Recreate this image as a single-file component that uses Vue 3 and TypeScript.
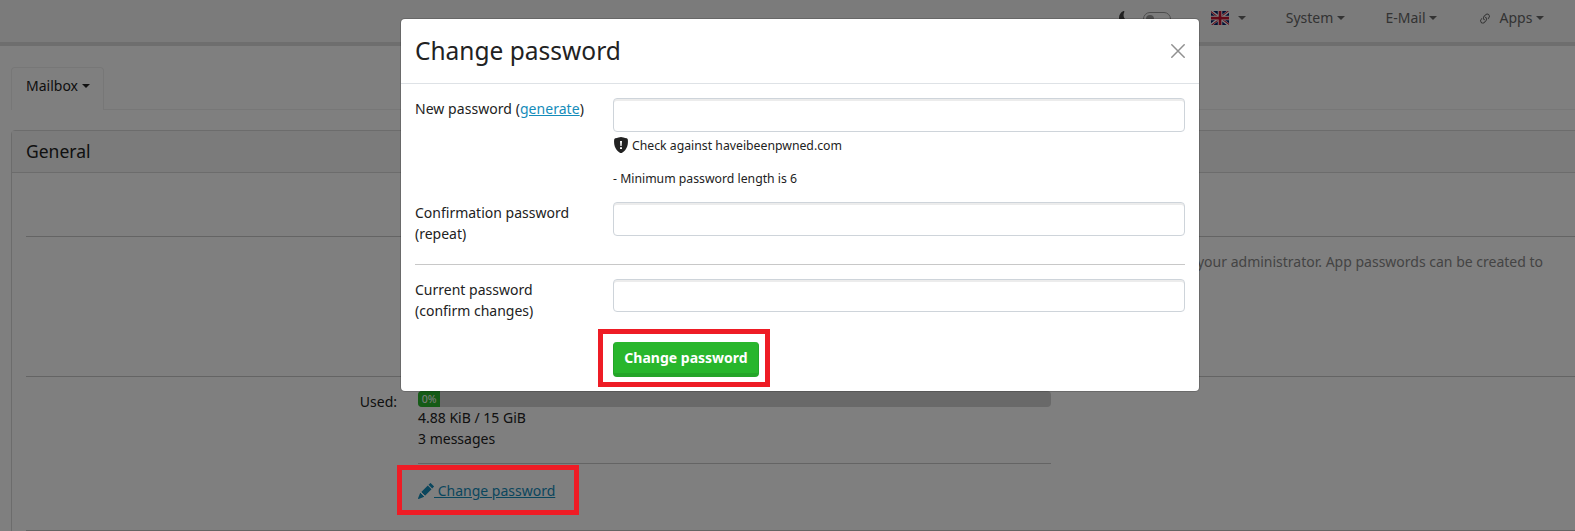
<script setup lang="ts">
interface NavItem {
  label: string
  icon?: boolean
}

const navItems: NavItem[] = [
  { label: 'System' },
  { label: 'E-Mail' },
  { label: 'Apps', icon: true },
]
const usedPercent = 0
</script>

<template>
  <div class="page">
    <nav class="navbar">
      <div class="theme">
        <svg class="moon" width="14" height="14" viewBox="0 0 16 16"><path d="M6 .278a.77.77 0 0 1 .08.858 7.2 7.2 0 0 0-.878 3.46c0 4.021 3.278 7.277 7.318 7.277q.792-.001 1.533-.16a.79.79 0 0 1 .81.316.73.73 0 0 1-.031.893A8.35 8.35 0 0 1 8.344 16C3.734 16 0 12.286 0 7.71 0 4.266 2.114 1.312 5.124.06A.75.75 0 0 1 6 .278" /></svg>
        <span class="switch"><i></i></span>
      </div>
      <div class="lang">
        <svg width="18" height="14" viewBox="0 0 640 480" preserveAspectRatio="none">
          <path fill="#012169" d="M0 0h640v480H0z" />
          <path fill="#fff" d="m75 0 244 181L562 0h78v62L400 241l240 178v61h-80L320 301 81 480H0v-60l239-178L0 64V0z" />
          <path fill="#c8102e" d="m424 281 216 159v40L369 281zm-184 20 6 35L54 480H0zM640 0v3L391 191l2-44L590 0zM0 0l239 176h-60L0 42z" />
          <path fill="#fff" d="M241 0v480h160V0zM0 160v160h640V160z" />
          <path fill="#c8102e" d="M0 193v96h640v-96zM273 0v480h96V0z" />
        </svg>
        <i class="caret"></i>
      </div>
      <div v-for="item in navItems" :key="item.label" class="nav-item">
        <svg v-if="item.icon" class="link-icon" width="14" height="14" viewBox="0 0 16 16">
          <path d="M4.715 6.542 3.343 7.914a3 3 0 1 0 4.243 4.243l1.828-1.829A3 3 0 0 0 8.586 5.5L8 6.086a1 1 0 0 0-.154.199 2 2 0 0 1 .861 3.337L6.88 11.45a2 2 0 1 1-2.83-2.83l.793-.792a4 4 0 0 1-.128-1.287z" />
          <path d="M6.586 4.672A3 3 0 0 0 7.414 9.5l.775-.776a2 2 0 0 1-.896-3.346L9.12 3.55a2 2 0 1 1 2.83 2.83l-.793.792c.112.42.155.855.128 1.287l1.372-1.372a3 3 0 1 0-4.243-4.243z" />
        </svg>
        <span>{{ item.label }}</span><i class="caret"></i>
      </div>
    </nav>

    <div class="tabs">
      <div class="tab"><span>Mailbox</span><i class="caret"></i></div>
    </div>

    <section class="card">
      <header class="card-header">General</header>
      <div class="card-body">
        <div class="block first"></div>
        <div class="block notice">your administrator. App passwords can be created to</div>
        <div class="block usage">
          <div class="usage-label">Used:</div>
          <div class="usage-main">
            <div class="progress"><div class="bar">{{ usedPercent }}%</div></div>
            <div>4.88 KiB / 15 GiB</div>
            <div>3 messages</div>
            <div class="change">
              <a class="change-link"><svg width="16" height="16" viewBox="0 0 16 16"><path d="M12.854.146a.5.5 0 0 0-.707 0L10.5 1.793 14.207 5.5l1.647-1.646a.5.5 0 0 0 0-.708zm.646 6.061L9.793 2.5 3.293 9H3.5a.5.5 0 0 1 .5.5v.5h.5a.5.5 0 0 1 .5.5v.5h.5a.5.5 0 0 1 .5.5v.5h.5a.5.5 0 0 1 .5.5v.207zm-7.468 7.468A.5.5 0 0 1 6 13.5V13h-.5a.5.5 0 0 1-.5-.5V12h-.5a.5.5 0 0 1-.5-.5V11h-.5a.5.5 0 0 1-.5-.5V10h-.5a.5.5 0 0 1-.175-.032l-.179.178a.5.5 0 0 0-.11.168l-2 5a.5.5 0 0 0 .65.65l5-2a.5.5 0 0 0 .168-.11z" /></svg><span>&nbsp;Change password</span></a>
            </div>
          </div>
        </div>
      </div>
    </section>

    <div class="backdrop">
      <div class="modal">
        <header class="modal-header">
          <h3>Change password</h3>
          <svg width="14" height="14" viewBox="0 0 14 14"><path d="M.8.8l12.4 12.4M13.2.8L.8 13.2" fill="none" stroke="#909090" stroke-width="1.5" stroke-linecap="round" /></svg>
        </header>
        <form class="modal-body" @submit.prevent>
          <div class="row new">
            <label>New password (<a>generate</a>)</label>
            <div class="field">
              <input type="password" />
              <div class="hint check">
                <svg width="14" height="16" viewBox="0 0 14 16"><path fill="#222" d="M7 0C6 0 3.2.8 1.3 1.3.7 1.5.3 2 .2 2.6-.4 7.2.9 10.6 2.7 12.9 4.2 14.8 6.3 16 7 16s2.8-1.2 4.3-3.1c1.8-2.3 3.1-5.7 2.5-10.3-.1-.6-.5-1.1-1.1-1.3C10.8.8 8 0 7 0z" /><path fill="#fff" d="M6 4h2l-.4 5H6.4zM6 10.2h2v1.800H6z" /></svg>
                <span>Check against haveibeenpwned.com</span>
              </div>
              <div class="hint rule">- Minimum password length is 6</div>
            </div>
          </div>
          <div class="row">
            <label>Confirmation password (repeat)</label>
            <div class="field"><input type="password" /></div>
          </div>
          <hr />
          <div class="row current">
            <label>Current password (confirm changes)</label>
            <div class="field"><input type="password" /></div>
          </div>
          <div class="actions"><button type="submit">Change password</button></div>
        </form>
      </div>
    </div>

    <div class="marker marker-button"></div>
    <div class="marker marker-link"></div>
  </div>
</template>

<style>
body {
  margin: 0;
  overflow: hidden;
}
</style>

<style scoped>
* {
  box-sizing: border-box;
}
.page {
  position: relative;
  width: 1575px;
  height: 531px;
  overflow: hidden;
  background: #fff;
  color: #222;
  font: 14px/21px "Noto Sans", sans-serif;
}
.navbar {
  display: flex;
  justify-content: flex-end;
  height: 46px;
  padding: 7px 31px 0 0;
  background: #f7f7f7;
  border-bottom: 4px solid #dcdcdc;
  color: #666;
}
.theme {
  display: flex;
  width: 92px;
}
.moon {
  margin: 4px 10px 0 0;
  fill: #444;
}
.switch {
  width: 28px;
  height: 14px;
  margin-top: 5px;
  padding: 2px;
  border: 1px solid #999;
  border-radius: 7px;
}
.switch i {
  display: block;
  width: 8px;
  height: 8px;
  border-radius: 50%;
  background: #999;
}
.lang {
  width: 75px;
}
.lang svg {
  margin-top: 4px;
  vertical-align: top;
}
.lang .caret {
  margin-left: 9px;
}
.nav-item {
  margin-left: 40.5px;
}
.nav-item:nth-child(3) {
  margin-left: 0;
}
.link-icon {
  margin-right: 8px;
  vertical-align: -3px;
  fill: currentColor;
}
.caret {
  display: inline-block;
  margin-left: 3.57px;
  vertical-align: 2.6px;
  border-top: 4.2px solid;
  border-right: 4.2px solid transparent;
  border-left: 4.2px solid transparent;
}
.tabs {
  display: flex;
  height: 43px;
  margin: 21px 0 0 11px;
  border-bottom: 1px solid #eee;
}
.tab {
  height: 43px;
  width: 93px;
  padding: 7px 0 0 14px;
  background: #fff;
  border: 1px solid #eee;
  border-bottom: 0;
  border-radius: 4px 4px 0 0;
}
.card {
  margin: 20px -20px 0 11px;
  border: 1px solid #d8d8d8;
  border-radius: 4px 0 0;
  height: 420px;
}
.card-header {
  height: 42px;
  padding: 10px 14px;
  background: #f7f7f7;
  border-bottom: 1px solid #d8d8d8;
  font-size: 17.5px;
}
.card-body {
  padding-left: 14px;
}
.block {
  border-bottom: 1px solid #c8c8c8;
}
.first {
  height: 64px;
}
.notice {
  height: 140px;
  padding: 14px 51px 0 0;
  text-align: right;
  color: #888;
}
.usage {
  display: flex;
  height: 154px;
}
.usage-label {
  width: 371px;
  padding-top: 14px;
  text-align: right;
}
.usage-main {
  width: 633px;
  margin-left: 21px;
  padding-top: 14px;
}
.progress {
  height: 16px;
  border-radius: 4px;
  background: #d3d3d3;
  overflow: hidden;
}
.bar {
  width: 22px;
  height: 16px;
  background: #28b62c;
  color: #fff;
  font-size: 10.5px;
  line-height: 16px;
  text-align: center;
}
.change {
  margin-top: 14px;
  padding-top: 16px;
  border-top: 1px solid #c8c8c8;
}
.change-link {
  display: flex;
  color: #158cba;
}
.change-link svg {
  margin-top: 3px;
  fill: currentColor;
}
.change-link span {
  text-decoration: underline;
}
.backdrop {
  position: absolute;
  inset: 0;
  display: flex;
  justify-content: center;
  align-items: flex-start;
  padding: 19px 0 0 25px;
  background: rgba(0, 0, 0, 0.5);
}
.modal {
  width: 798px;
  height: 372px;
  background: #fff;
  border-radius: 4px;
  box-shadow: 0 0 0 1px rgba(0, 0, 0, 0.16);
}
.modal-header {
  display: flex;
  justify-content: space-between;
  align-items: center;
  height: 65px;
  padding: 0 14px;
  border-bottom: 1px solid #dee2e6;
}
h3 {
  margin: 0;
  font-size: 24.5px;
  font-weight: 400;
  line-height: 30px;
}
.modal-body {
  padding: 14px 14px 0;
}
.row {
  display: flex;
  height: 48px;
}
.row.new {
  height: 104px;
}
.row.current {
  height: 63px;
}
label {
  width: 198px;
  padding-right: 30px;
}
.row.new label {
  padding-right: 0;
  letter-spacing: 0.05px;
}
label a {
  color: #158cba;
  text-decoration: underline;
}
.field {
  flex: 1;
}
input {
  display: block;
  width: 100%;
  height: 34px;
  border: 1px solid #ced4da;
  border-radius: 4px;
  background: #fff;
  box-shadow: inset 0 2px 0 rgba(0, 0, 0, 0.075);
  outline: 0;
}
.current input {
  height: 33px;
}
.hint {
  display: flex;
  font-size: 12.25px;
  line-height: 18px;
}
.check {
  gap: 4px;
  margin-top: 5px;
  padding-left: 1px;
}
.rule {
  margin-top: 15px;
}
hr {
  height: 1px;
  margin: 14px 0;
  border: 0;
  background: #c8c8c8;
}
.actions {
  padding-left: 198px;
}
button {
  display: block;
  width: 146px;
  height: 35px;
  padding: 0;
  border: 1px solid #24a528;
  border-width: 0 1px 4px;
  border-radius: 4px;
  background: #28b62c;
  color: #fff;
  font: 700 14px/21px "Noto Sans", sans-serif;
}
.marker {
  position: absolute;
  border: 5px solid #ee1c25;
}
.marker-button {
  left: 598px;
  top: 329px;
  width: 172px;
  height: 58px;
}
.marker-link {
  left: 397px;
  top: 465px;
  width: 182px;
  height: 50px;
}
</style>
